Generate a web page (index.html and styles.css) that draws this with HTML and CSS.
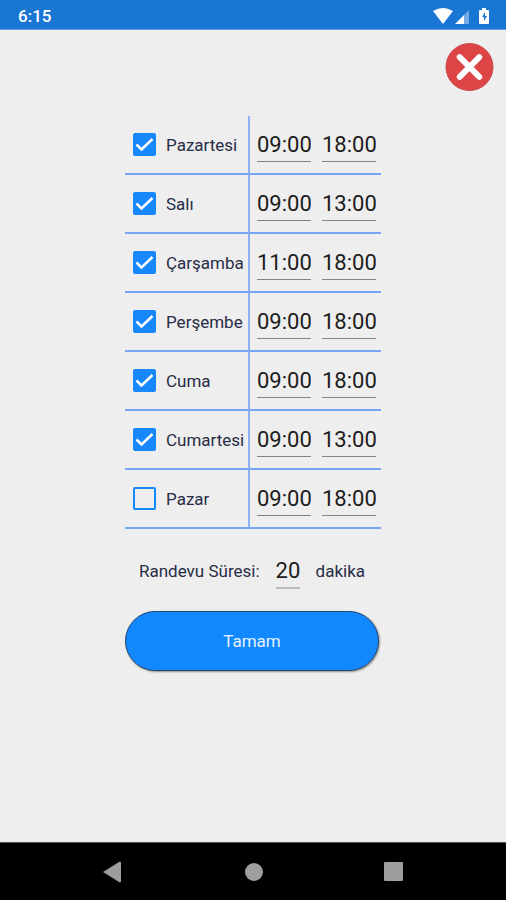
FILE: index.html
```html
<!DOCTYPE html>
<html lang="tr">
<head>
<meta charset="utf-8">
<meta name="viewport" content="width=device-width, initial-scale=1">
<title>Randevu</title>
<link rel="stylesheet" href="styles.css">
</head>
<body>
<header class="status">
  <span>6:15</span>
  <svg class="status-icons" width="60" height="20" viewBox="0 0 60 20" aria-hidden="true">
    <path fill="#fff" d="M0 5Q10-1 20 5L10 18Z"/>
    <path fill="#fff" d="M22 18L31 9V18Z"/>
    <path fill="#fff" fill-opacity=".4" d="M31 9L36 4V18H31Z"/>
    <path fill="#fff" d="M47 4H49V2H53V4H55Q56 4 56 5V17Q56 18 55 18H47Q46 18 46 17V5Q46 4 47 4Z"/>
    <path fill="#1976d2" d="M52 6L49 11H51V15L54 10H52Z"/>
  </svg>
</header>
<main class="page">
  <button class="close" type="button" aria-label="Kapat">
    <svg width="49" height="50" viewBox="0 0 50 50" aria-hidden="true">
      <circle cx="25" cy="25" r="24" fill="#dc4446" stroke="#c94a4a"/>
      <path d="M15 15L35 35M35 15L15 35" stroke="#fff" stroke-width="6" stroke-linecap="round"/>
    </svg>
  </button>
  <form class="form">
    <table class="days">
      <tbody>
        <tr><td><label class="day"><input type="checkbox" checked>Pazartesi</label></td><td><div class="times"><input class="field" type="text" value="09:00" aria-label="Pazartesi başlangıç"><input class="field" type="text" value="18:00" aria-label="Pazartesi bitiş"></div></td></tr>
        <tr><td><label class="day"><input type="checkbox" checked>Salı</label></td><td><div class="times"><input class="field" type="text" value="09:00" aria-label="Salı başlangıç"><input class="field" type="text" value="13:00" aria-label="Salı bitiş"></div></td></tr>
        <tr><td><label class="day"><input type="checkbox" checked>Çarşamba</label></td><td><div class="times"><input class="field" type="text" value="11:00" aria-label="Çarşamba başlangıç"><input class="field" type="text" value="18:00" aria-label="Çarşamba bitiş"></div></td></tr>
        <tr><td><label class="day"><input type="checkbox" checked>Perşembe</label></td><td><div class="times"><input class="field" type="text" value="09:00" aria-label="Perşembe başlangıç"><input class="field" type="text" value="18:00" aria-label="Perşembe bitiş"></div></td></tr>
        <tr><td><label class="day"><input type="checkbox" checked>Cuma</label></td><td><div class="times"><input class="field" type="text" value="09:00" aria-label="Cuma başlangıç"><input class="field" type="text" value="18:00" aria-label="Cuma bitiş"></div></td></tr>
        <tr><td><label class="day"><input type="checkbox" checked>Cumartesi</label></td><td><div class="times"><input class="field" type="text" value="09:00" aria-label="Cumartesi başlangıç"><input class="field" type="text" value="13:00" aria-label="Cumartesi bitiş"></div></td></tr>
        <tr><td><label class="day"><input type="checkbox">Pazar</label></td><td><div class="times"><input class="field" type="text" value="09:00" aria-label="Pazar başlangıç"><input class="field" type="text" value="18:00" aria-label="Pazar bitiş"></div></td></tr>
      </tbody>
    </table>
    <div class="duration">
      <label for="minutes">Randevu Süresi:</label>
      <input class="field field-short" id="minutes" type="text" value="20">
      <span>dakika</span>
    </div>
    <button class="submit" type="button">Tamam</button>
  </form>
</main>
<nav class="navbar" aria-label="Sistem">
  <button type="button" aria-label="Geri"><svg width="20" height="22" viewBox="0 0 20 22"><path fill="#9e9e9e" d="M0 11L16 1Q18 0 18 2V20Q18 22 16 21Z"/></svg></button>
  <button type="button" aria-label="Ana ekran"><svg width="20" height="22" viewBox="0 0 20 22"><circle cx="11" cy="11" r="9" fill="#9e9e9e"/></svg></button>
  <button type="button" aria-label="Son uygulamalar"><svg width="20" height="22" viewBox="0 0 20 22"><rect x="1" y="1" width="19" height="19" rx="1" fill="#9e9e9e"/></svg></button>
</nav>
</body>
</html>
```

FILE: styles.css
```css
* {
  box-sizing: border-box;
}

body {
  margin: 0;
  min-height: 100vh;
  display: flex;
  flex-direction: column;
  background: #eee;
  color: #282c46;
  font-family: Roboto, "Liberation Sans", sans-serif;
  font-size: 17px;
  line-height: 24px;
}

button,
input {
  font: inherit;
  color: inherit;
  margin: 0;
  padding: 0;
  border: 0;
  background: none;
}

svg {
  display: block;
}

.status {
  display: flex;
  align-items: center;
  justify-content: space-between;
  height: 30px;
  padding: 2px 13px 0 18px;
  background: #1976d2;
  border-bottom: 1px solid #5e9be0;
  color: #fff;
  font-weight: 500;
}

.page {
  flex: 1;
  display: flex;
  flex-direction: column;
  padding: 12px;
}

.close {
  align-self: flex-end;
  border-radius: 50%;
}

.form {
  align-self: center;
  display: flex;
  flex-direction: column;
  width: 256px;
  margin-top: 24px;
}

.days {
  width: 100%;
  border-collapse: separate;
  border-spacing: 0;
}

.days td {
  height: 59px;
  padding: 0;
  border-bottom: 2px solid #78a4f5;
}

.days td:first-child {
  width: 125px;
  border-right: 2px solid #8db0f6;
}

.day {
  display: flex;
  align-items: center;
  gap: 10px;
  padding-left: 8px;
}

.day input {
  appearance: none;
  flex: none;
  width: 23px;
  height: 23px;
  border: 2px solid #1688fb;
  border-radius: 2px;
}

.day input:checked {
  background: #1688fb url("data:image/svg+xml,%3Csvg xmlns='http://www.w3.org/2000/svg' viewBox='0 0 38 38'%3E%3Cpath d='M3 19L13 29L35 8' fill='none' stroke='white' stroke-width='5'/%3E%3C/svg%3E") center / 19px 19px no-repeat;
}

.times {
  display: flex;
  justify-content: flex-end;
  gap: 11px;
  padding-right: 5px;
}

.field {
  width: 54px;
  height: 35px;
  border-bottom: 1px solid #858585;
  color: #1c1c1c;
  font-size: 22px;
  text-align: center;
}

.field-short {
  width: 24px;
  border-bottom: 2px solid #bbb;
}

.duration {
  display: flex;
  align-items: center;
  justify-content: center;
  gap: 16px;
  margin-top: 25px;
  padding-right: 2px;
}

.duration label,
.duration span {
  padding-bottom: 2px;
}

.submit {
  height: 60px;
  margin: 22px 2px 0 0;
  border: 1px solid #24486c;
  border-radius: 30px;
  background: #1288ff;
  box-shadow: 1px 1px 2px rgba(0, 0, 0, 0.4);
  color: #e4f1ff;
}

.navbar {
  display: flex;
  align-items: center;
  justify-content: center;
  gap: 120px;
  height: 58px;
  border-top: 1px solid #555;
  background: #000;
}
```
